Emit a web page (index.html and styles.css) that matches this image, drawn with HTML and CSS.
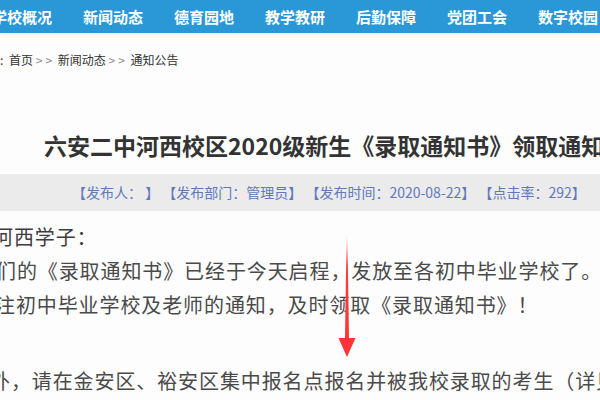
FILE: index.html
```html
<!DOCTYPE html>
<html lang="zh-CN">
<head>
<meta charset="utf-8">
<title>录取通知书领取通知</title>
<link rel="stylesheet" href="styles.css">
</head>
<body>
<nav class="nav">
  <a class="nav-item first">学校概况</a>
  <a class="nav-item">新闻动态</a>
  <a class="nav-item">德育园地</a>
  <a class="nav-item">教学教研</a>
  <a class="nav-item">后勤保障</a>
  <a class="nav-item">党团工会</a>
  <a class="nav-item">数字校园</a>
</nav>
<div class="crumb"><span class="crumb-head">当前位置</span><span class="colon">:</span> 首页 <span class="sep">&gt;&gt;</span> 新闻动态 <span class="sep">&gt;&gt;</span> 通知公告</div>
<h1 class="title">六安二中河西校区2020级新生《录取通知书》领取通知</h1>
<div class="meta">【发布人： 】 【发布部门：管理员】 【发布时间：2020-08-22】 【点击率：292】</div>
<div class="content">
  <p class="line l1">河西学子：</p>
  <p class="line l2">们的《录取通知书》已经于今天启程，发放至各初中毕业学校了。</p>
  <p class="line l3">注初中毕业学校及老师的通知，及时领取《录取通知书》！</p>
  <p class="line l4">外，请在金安区、裕安区集中报名点报名并被我校录取的考生（详见附件）</p>
</div>
<svg class="arrow" width="18" height="126" viewBox="0 0 18 126">
  <defs>
    <linearGradient id="fade" x1="0" y1="0" x2="0" y2="1">
      <stop offset="0" stop-color="#ff3b3b" stop-opacity="0"/>
      <stop offset="0.25" stop-color="#ff3b3b" stop-opacity="1"/>
      <stop offset="1" stop-color="#ff3333" stop-opacity="1"/>
    </linearGradient>
  </defs>
  <path d="M8.6 1 L9.4 1 L11 104 L17.5 104 L9 123 L0.5 104 L7 104 Z" fill="url(#fade)"/>
</svg>
</body>
</html>
```
FILE: styles.css
```css
html, body {
  margin: 0;
  padding: 0;
}
body {
  width: 600px;
  height: 400px;
  overflow: hidden;
  position: relative;
  background: #fdfdfd;
  font-family: "Noto Sans CJK SC", "Noto Sans", sans-serif;
  white-space: nowrap;
}
.nav {
  height: 33px;
  background: #2a97d7;
  display: flex;
  align-items: center;
  box-shadow: 0 2px 6px rgba(0,0,0,0.06);
}
.nav-item {
  color: #fff;
  font-size: 15px;
  font-weight: bold;
  width: 60px;
  margin-right: 31px;
  line-height: 28px;
  flex: none;
}
.nav-item.first {
  margin-left: -8px;
}
.crumb {
  margin-top: 17px;
  line-height: 20px;
  height: 20px;
  font-size: 12px;
  color: #333;
  margin-left: -48px;
}
.colon {
  margin-right: 3px;
}
.sep {
  color: #8a8a8a;
  letter-spacing: 3px;
}
.title {
  margin: 60px 0 0 44px;
  font-size: 23px;
  line-height: 30px;
  height: 30px;
  font-weight: bold;
  color: #333;
}
.meta {
  margin-top: 14px;
  height: 37px;
  line-height: 37px;
  background: #ebebeb;
  color: #6079bd;
  font-size: 14px;
  padding-left: 72px;
}
.content {
  padding-top: 9px;
  color: #4a4a4a;
  font-size: 20px;
  letter-spacing: 0.9px;
}
.line {
  margin: 0;
  line-height: 34px;
}
.l1 { margin-left: -7px; color: #3c3c3c; }
.l2 { margin-left: -4px; }
.l3 { margin-left: -5px; }
.l4 { margin-left: -10px; margin-top: 42px; }
.arrow {
  position: absolute;
  left: 338px;
  top: 234px;
}
```
